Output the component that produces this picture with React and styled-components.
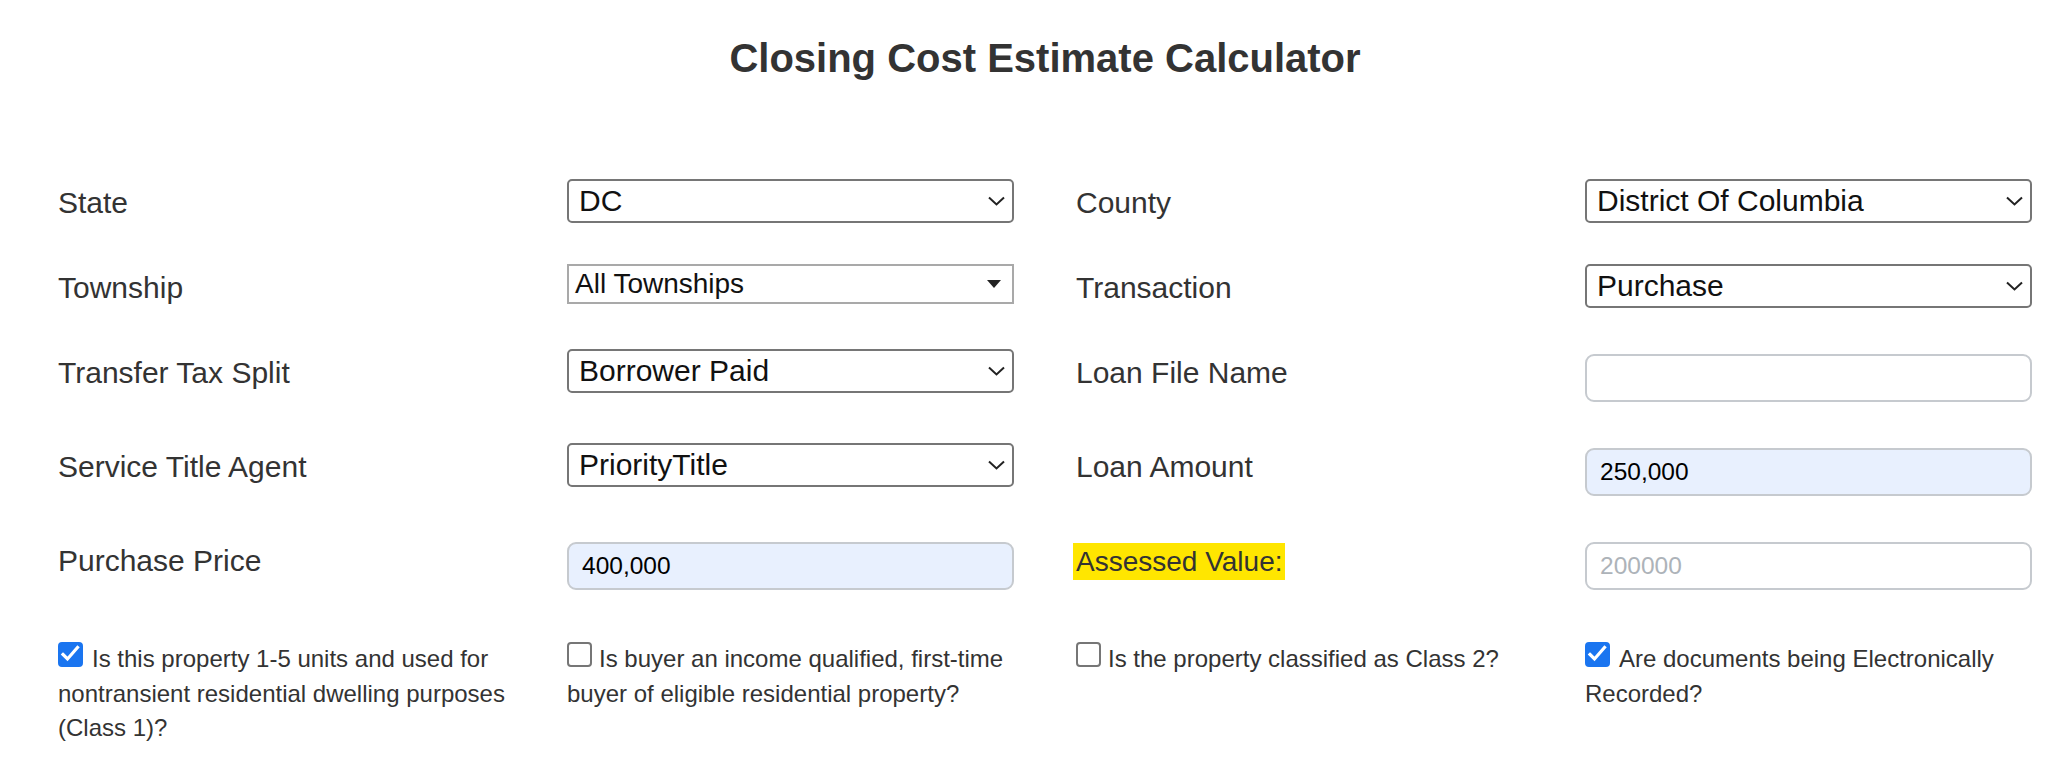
import React from 'react';
import styled, { createGlobalStyle } from 'styled-components';

const Global = createGlobalStyle`
  html, body { margin: 0; padding: 0; background: #fff; }
  body { font-family: "Liberation Sans", Arial, Helvetica, sans-serif; color: #333; }
  * { box-sizing: border-box; }
`;

const Page = styled.div`
  width: 2072px;
  padding: 35px 40px 40px 58px;
`;

const Title = styled.h1`
  margin: 0;
  text-align: center;
  font-size: 40px;
  line-height: 46px;
  font-weight: 700;
  color: #333;
`;

const Form = styled.div`
  margin-top: 98px;
  display: flex;
  flex-direction: column;
  gap: 41px;
`;

const Row = styled.div`
  display: grid;
  grid-template-columns: repeat(4, 447px);
  column-gap: 62px;
  align-items: start;
  margin-top: ${p => p.$extra || 0}px;
`;

const Label = styled.div`
  padding-top: 7px;
  font-size: 30px;
  line-height: 34px;
  color: #333;
`;

const Highlight = styled.span`
  display: inline-block;
  background: #ffe600;
  font-size: 28px;
  line-height: 37px;
  margin-left: -3px;
  padding: 0 2px 0 3px;
  margin-top: -2px;
`;

const SelectBox = styled.div`
  display: flex;
  align-items: center;
  justify-content: space-between;
  height: ${p => (p.$legacy ? 40 : 44)}px;
  border: 2px solid ${p => (p.$legacy ? '#a9a9a9' : '#767676')};
  border-radius: ${p => (p.$legacy ? 0 : 5)}px;
  padding: ${p => (p.$legacy ? '0 11px 0 6px' : '0 7px 0 10px')};
  font-size: ${p => (p.$legacy ? 28 : 30)}px;
  color: #111;
  background: #fff;
  white-space: nowrap;
`;

const Input = styled.input`
  display: block;
  width: 100%;
  height: 48px;
  margin: 5px 0 0;
  border: 2px solid #c6cacf;
  border-radius: 9px;
  padding: 0 13px;
  font-family: "Liberation Sans", Arial, Helvetica, sans-serif;
  font-size: 24.5px;
  color: #000;
  background: ${p => (p.$filled ? '#e8f0fe' : '#fff')};
  outline: none;
  &::placeholder { color: #adb3b9; }
`;

const CheckText = styled.div`
  font-size: 24px;
  line-height: 34.5px;
  color: #333;
`;

const Box = styled.span`
  display: inline-block;
  overflow: hidden;
  width: 25px;
  height: 25px;
  vertical-align: baseline;
  margin-right: ${p => (p.$checked ? 9 : 7)}px;
  border-radius: 4px;
  border: 2px solid ${p => (p.$checked ? '#1a75f0' : '#767676')};
  background: ${p => (p.$checked ? '#1a75f0' : '#fff')};
`;

const Chevron = () => (
  <svg width="17" height="10" viewBox="0 0 17 10" fill="none">
    <polyline points="1,1.5 8.5,8.5 16,1.5" stroke="#222" strokeWidth="2" />
  </svg>
);

const Triangle = () => (
  <svg width="14" height="8" viewBox="0 0 14 8">
    <polygon points="0,0 14,0 7,8" fill="#222" />
  </svg>
);

const Check = () => (
  <svg width="21" height="21" viewBox="0 0 21 21" fill="none" style={{ display: 'block' }}>
    <path d="M3 10.5 L7.5 15 L17.5 3.5" stroke="#fff" strokeWidth="3.2" strokeLinecap="square" />
  </svg>
);

const Select = ({ value, legacy }) => (
  <SelectBox $legacy={legacy}>
    <span>{value}</span>
    {legacy ? <Triangle /> : <Chevron />}
  </SelectBox>
);

const Field = ({ f }) => {
  if (f.type === 'select') return <Select value={f.value} legacy={f.legacy} />;
  return (
    <Input
      readOnly
      $filled={f.filled}
      value={f.value || ''}
      placeholder={f.placeholder || ''}
    />
  );
};

const rows = [
  [
    { label: 'State', f: { type: 'select', value: 'DC' } },
    { label: 'County', f: { type: 'select', value: 'District Of Columbia' } },
  ],
  [
    { label: 'Township', f: { type: 'select', value: 'All Townships', legacy: true } },
    { label: 'Transaction', f: { type: 'select', value: 'Purchase' } },
  ],
  [
    { label: 'Transfer Tax Split', f: { type: 'select', value: 'Borrower Paid' } },
    { label: 'Loan File Name', f: { type: 'input' } },
  ],
  [
    { label: 'Service Title Agent', f: { type: 'select', value: 'PriorityTitle' } },
    { label: 'Loan Amount', f: { type: 'input', value: '250,000', filled: true } },
  ],
  [
    { label: 'Purchase Price', f: { type: 'input', value: '400,000', filled: true } },
    { label: 'Assessed Value:', highlight: true, f: { type: 'input', placeholder: '200000' } },
  ],
];

const checks = [
  { checked: true, text: 'Is this property 1-5 units and used for nontransient residential dwelling purposes (Class 1)?' },
  { checked: false, text: 'Is buyer an income qualified, first-time buyer of eligible residential property?' },
  { checked: false, text: 'Is the property classified as Class 2?' },
  { checked: true, text: 'Are documents being Electronically Recorded?' },
];

export default function App() {
  return (
    <>
      <Global />
      <Page>
        <Title>Closing Cost Estimate Calculator</Title>
        <Form>
          {rows.map((r, i) => (
            <Row key={i}>
              {r.map((c, j) => (
                <React.Fragment key={j}>
                  <Label>{c.highlight ? <Highlight>{c.label}</Highlight> : c.label}</Label>
                  <Field f={c.f} />
                </React.Fragment>
              ))}
            </Row>
          ))}
          <Row $extra={11}>
            {checks.map((c, i) => (
              <CheckText key={i}>
                <Box $checked={c.checked}>{c.checked && <Check />}</Box>
                {c.text}
              </CheckText>
            ))}
          </Row>
        </Form>
      </Page>
    </>
  );
}
